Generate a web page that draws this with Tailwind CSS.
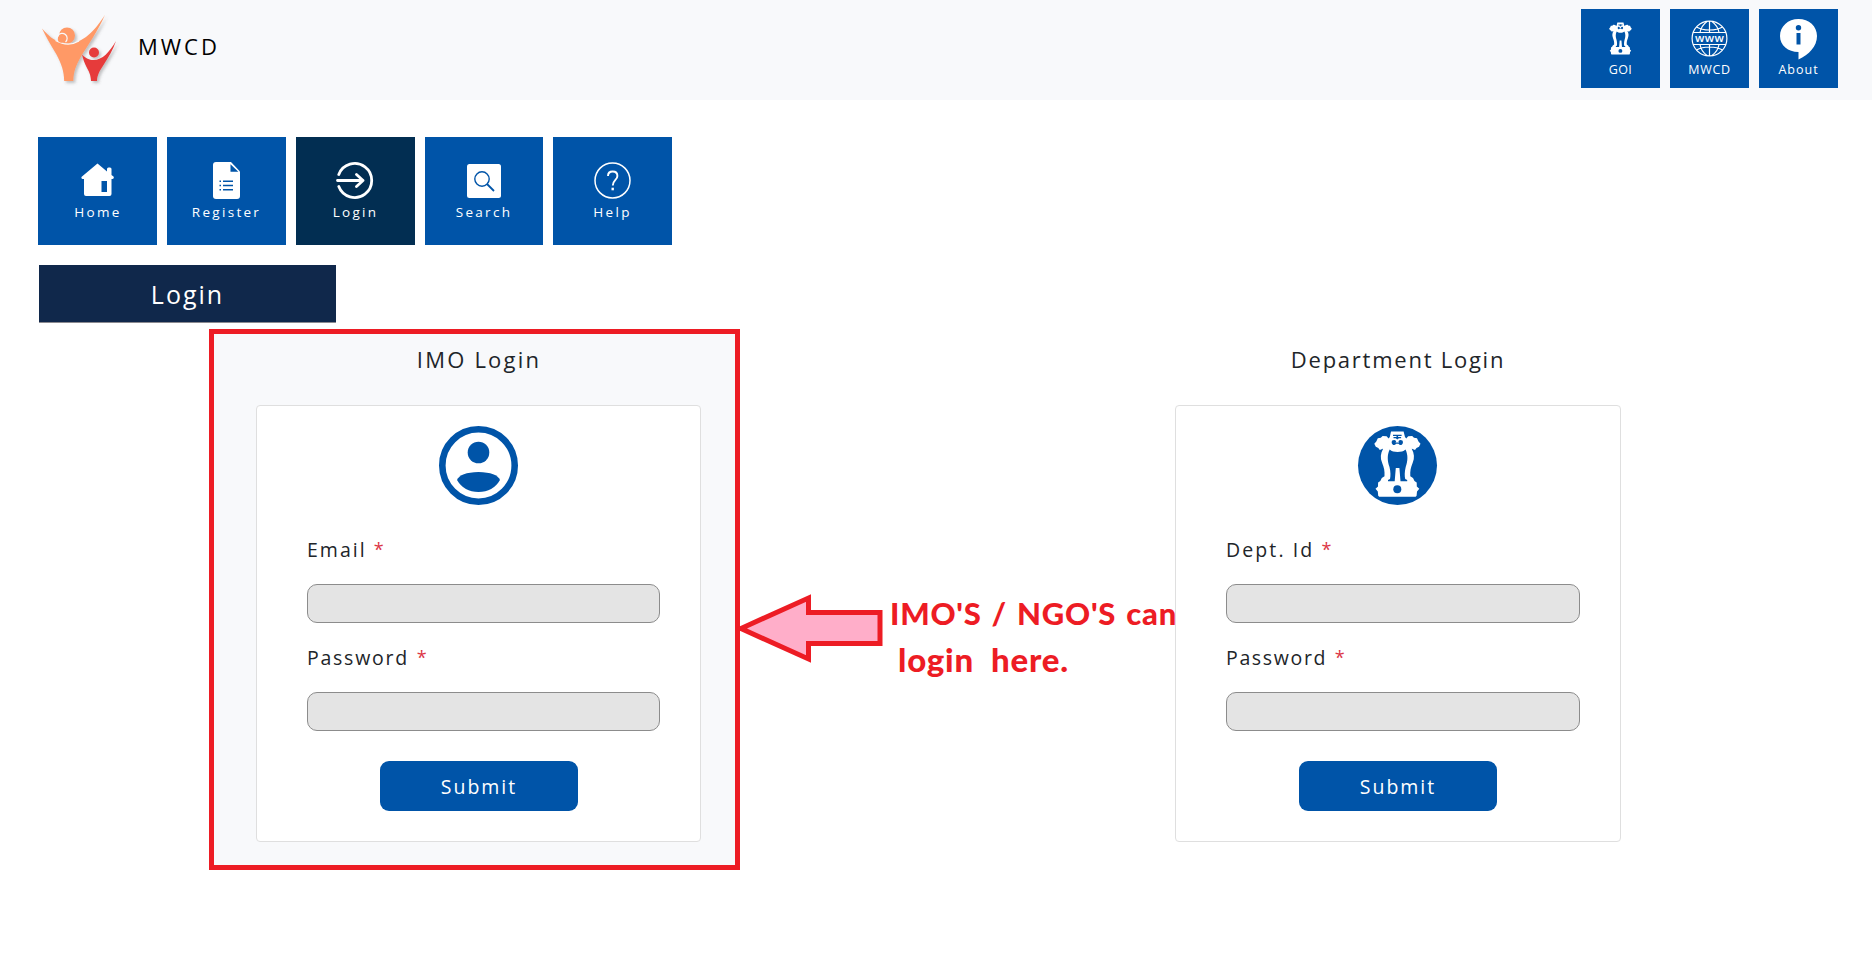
<!DOCTYPE html>
<html lang="en">
<head>
<meta charset="utf-8">
<title>MWCD Login</title>
<script src="https://cdn.jsdelivr.net/npm/@tailwindcss/browser@4"></script>
</head>
<body class="relative h-[966px] overflow-hidden bg-white font-['Open_Sans','Noto_Sans',sans-serif] text-[#212529]">
<svg class="hidden">
  <symbol id="emblem" viewBox="16 5 47 66">
    <path fill="#fff" d="M33 5.500h12.600l1.400 5.500 1.200 1.500 2-2.200 4-.3 1.800 1.800 3 .4 1.500 3.400 2 2.200-1.500 3-2.500 1.200-1.500 2-3-1.200-.3 0c2.600 5 3 9 1 14-2 5-2.700 8-2.400 13.500l2.700 1.800 1.500 2.800 2.200 1.600.1 4 2.500 2.300-2.300 2.700-.4 4.200-1 1h-36.400l-1-1-.4-4.200-2.300-2.700 2.500-2.300.1-4 2.200-1.600 1.500-2.800 2.700-1.800c.3-5.500-.4-8.500-2.400-13.500-2-5-1.600-9 1-14l-.3 0-3 1.200-1.500-2-2.500-1.200-1.500-3 2-2.200 1.500-3.400 3-.4 1.800-1.800 4 .3 2 2.200 1.200-1.500z"/>
    <g fill="#0054a8">
      <path d="M31.700 23.500C29 29 29.300 35 31.500 41c1.200 5 1.200 9 .5 12l-2 1v1.300h6.700l1.100-13.200h3.600l1.100 13.200h6.700V54l-2-1c-.7-3-.7-7 .5-12 2.200-6 2.500-12-.2-17.500-2 1.800-4.600 2.500-7.900 2.500s-6-.7-7.900-2.500z"/>
      <path d="M35 8.800h8.600v1.300h-3.500v.9h3v1.200h-2.200l-1.600 1.300-1.600-1.300h-2.200V11h3v-.9H35z"/>
      <path d="M34.200 14.500q2.500-1.500 4 .8l-.7 1.300h3.600l-.7-1.300q1.500-2.300 4-.8 1.500 2.500-1 4.500-2 .5-2.800-1.200h-2.600q-.8 1.700-2.800 1.200-2.500-2-1-4.500z"/>
      <circle cx="39.300" cy="63.300" r="4"/>
    </g>
  </symbol>
</svg>

<header class="flex h-[100px] items-start bg-[#f8f9fb] pl-[40px] pr-[34px]">
  <svg class="mt-[13px] h-[74px] w-[80px] shrink-0" viewBox="40 13 80 74">
    <defs><filter id="sh" x="-20%" y="-20%" width="150%" height="150%"><feDropShadow dx="2" dy="2" stdDeviation="1.600" flood-color="#555" flood-opacity=".35"/></filter></defs>
    <g filter="url(#sh)">
      <path fill="#ff9966" d="M42 28.500C50 38 58 43.500 68 43.500c15 0 27-13 37-28.800C98 31 88 45 81 56.500c-5 9-7.500 15-7.700 24.500h-9.100c-.2-10-2.700-17-7.700-26.500C51 45 46 37 42 28.500z"/>
      <circle cx="67" cy="35.500" r="8" fill="#ff9966"/>
      <path fill="#e63b3b" d="M82 54.500c4 4 7 5.500 11.500 5.500 9 0 16-8 22.500-19-3 9-8 17-12.500 24-4 6-6.300 10-6.500 16h-6c-.2-6-2-9.500-4.500-14-2-4-3.500-8-4.500-12.500z"/>
      <circle cx="94" cy="52.500" r="5" fill="#e63b3b"/>
    </g>
    <path d="M55.500 40.500Q68 47.500 79 41" fill="none" stroke="#f8f9fb" stroke-width="1.200"/>
    <path d="M58 35.500a5 5 0 1 1 7.500 6.500" fill="none" stroke="#f8f9fb" stroke-width="1.200"/>
    <circle cx="61.500" cy="39" r="3.700" fill="#ff9966"/>
  </svg>
  <div class="ml-[18px] mt-[30px] text-[22px] leading-8 tracking-[3px] text-black">MWCD</div>
  <div class="ml-auto mt-[9px] flex gap-[10px] text-[12.500px] leading-4 tracking-[1px] text-white">
    <a class="flex h-[79px] w-[79px] flex-col items-center bg-[#0054a8] pt-[13px]">
      <svg class="h-[33px] w-[23px]"><use href="#emblem"/></svg>
      <span class="mt-[7px] tracking-[.4px]">GOI</span>
    </a>
    <a class="flex h-[79px] w-[79px] flex-col items-center bg-[#0054a8] pt-[11px]">
      <svg class="h-[37px] w-[37px]" viewBox="0 0 37 37" fill="none" stroke="#fff" stroke-width="1.200">
        <circle cx="18.500" cy="18.500" r="17.400"/>
        <path d="M18.500 1v11M18.500 25v11M5.500 7q5 3 13 3t13-3M5.500 30q5-3 13-3t13 3M2 12.500h33M2 24.500h33M16 1.500Q10 6 9 12.500M21 1.500Q27 6 28 12.500M16 35.500Q10 31 9 24.500M21 35.500Q27 31 28 24.500"/>
        <path d="M3.500 13.100h30v10.800h-30z" fill="#0054a8" stroke="none"/>
        <text x="18.500" y="22" text-anchor="middle" textLength="29" letter-spacing="0" font-size="11.500" font-weight="600" fill="#fff" stroke="none">www</text>
      </svg>
      <span class="mt-[5px] tracking-[.7px]">MWCD</span>
    </a>
    <a class="flex h-[79px] w-[79px] flex-col items-center bg-[#0054a8] pt-[10px]">
      <svg class="h-[41px] w-[37px]" viewBox="0 0 37 41"><path fill="#fff" d="M18.500 0C29 0 37 7 37 17c0 10.500-8 18.500-18.500 23.500V33C8 33 0 26.500 0 17S8 0 18.500 0z"/><circle cx="18.500" cy="8.700" r="2.700" fill="#0054a8"/><path fill="#0054a8" d="M16.500 14h4v11.500h-4z"/></svg>
      <span class="mt-[2px]">About</span>
    </a>
  </div>
</header>

<nav class="ml-[38px] mt-[37px] flex gap-[10px] text-[13.500px] leading-5 tracking-[2.300px] text-white">
  <a class="flex h-[108px] w-[119px] flex-col items-center bg-[#0054a8] pt-[25px]">
    <svg class="h-[37px] w-[33px]" viewBox="0 0 33 37"><path fill="#fff" fill-rule="evenodd" d="M16.500 1.500 26 9.500V7q0-1.500 1.500-1.500h1.500q1.500 0 1.500 1.500v6l2 1.500q1 2-1 2.500h-1V32q0 2-2 2H5q-2 0-2-2V17H1.500q-2-1-.5-2.500zM20.500 19v11h5.500V19z"/></svg>
    <span class="mt-[3px] pl-px">Home</span>
  </a>
  <a class="flex h-[108px] w-[119px] flex-col items-center bg-[#0054a8] pt-[25px]">
    <svg class="h-[37px] w-[27px]" viewBox="0 0 27 37"><path fill="#fff" d="M3 0h15l9 9.500V34q0 3-3 3H3q-3 0-3-3V3q0-3 3-3z"/><path fill="#0054a8" d="M17.500 2.200v7.600h7.800zM6.500 18.500H8v1.500H6.500zM10 18.500h10v1.500H10zM6.500 22.800H8v1.500H6.500zM10 22.800h10v1.500H10zM6.500 27H8v1.500H6.500zM10 27h10v1.500H10z"/></svg>
    <span class="mt-[3px]">Register</span>
  </a>
  <a class="flex h-[108px] w-[119px] flex-col items-center bg-[#022e52] pt-[25px]">
    <svg class="mr-px h-[37px] w-[38px]" viewBox="0 0 38 37" fill="none" stroke="#fff" stroke-width="2.800" stroke-linecap="round" stroke-linejoin="round"><path d="M2.800 12.500a17 17 0 1 1 0 12M1.500 18.500H27M20.500 12.500l6.500 6-6.500 6"/></svg>
    <span class="mt-[3px]">Login</span>
  </a>
  <a class="flex h-[108px] w-[118px] flex-col items-center bg-[#0054a8] pt-[25px]">
    <svg class="h-[37px] w-[34px]" viewBox="0 0 34 37"><rect y="2" width="34" height="34" rx="2.500" fill="#fff"/><circle cx="15" cy="17" r="7.200" fill="none" stroke="#0054a8" stroke-width="1.400"/><path d="m20 22 7 7" stroke="#0054a8" stroke-width="1.800"/></svg>
    <span class="mt-[3px]">Search</span>
  </a>
  <a class="flex h-[108px] w-[119px] flex-col items-center bg-[#0054a8] pt-[25px]">
    <svg class="h-[37px] w-[37px]" viewBox="0 0 37 37" fill="none" stroke="#fff"><circle cx="18.500" cy="18.500" r="17.500" stroke-width="1.500"/><path d="M14 14q0-4.500 4.700-4.500t4.700 4.500q0 2-2.200 4.200t-2.400 5.300" stroke-width="1.900"/><path d="M17.500 25.700h2.400v2.600h-2.400z" fill="#fff" stroke="none"/></svg>
    <span class="mt-[3px]">Help</span>
  </a>
</nav>

<h1 class="ml-[39px] mt-5 h-[58px] w-[297px] border-b border-[#8b8a90] bg-[#10284b] pt-[11px] text-center text-[25px] leading-9 tracking-[2px] text-white">Login</h1>

<main class="ml-[209px] mt-[6px] flex gap-[388px]">
  <section class="flex h-[541px] w-[531px] flex-col items-center border-5 border-[#ed1c24] bg-[#f8f9fb] pl-[8px]">
    <h2 class="mt-[9px] pl-px text-[22px] leading-8 tracking-[2.200px]">IMO Login</h2>
    <form class="mt-[30px] flex h-[437px] w-[445px] flex-col rounded-[4px] border border-[#dfdfdf] bg-white pl-[50px]">
      <svg class="ml-[132px] mt-[20px] h-[79px] w-[79px] shrink-0" viewBox="0 0 79 79"><circle cx="39.500" cy="39.500" r="36.200" fill="none" stroke="#0054a8" stroke-width="6.600"/><circle cx="39.500" cy="26.500" r="10.800" fill="#0054a8"/><path fill="#0054a8" d="M18 54q3-7.500 21.500-8Q58 46.500 61 54 54 66 39.500 66T18 54z"/></svg>
      <label class="mt-[29px] h-8 text-[19.500px] leading-8 tracking-[2px]">Email <span class="align-[1px] text-[18px] leading-none text-[#dc3545]">*</span></label>
      <input class="mt-[18px] h-[39px] w-[353px] shrink-0 rounded-[10px] border border-[#8c8c8c] bg-[#e4e4e4]">
      <label class="mt-[19px] h-8 text-[19.500px] leading-8 tracking-[1.750px]">Password <span class="ml-px align-[1px] text-[18px] leading-none text-[#dc3545]">*</span></label>
      <input type="password" class="mt-[18px] h-[39px] w-[353px] shrink-0 rounded-[10px] border border-[#8c8c8c] bg-[#e4e4e4]">
      <button type="button" class="ml-[73px] mt-[30px] h-[50px] w-[198px] rounded-[9px] bg-[#0054a8] pt-[2px] text-[19.500px] tracking-[2px] text-white">Submit</button>
    </form>
  </section>
  <section class="flex h-[541px] w-[540px] flex-col items-center pt-[5px]">
    <h2 class="mt-[9px] text-[22px] leading-8 tracking-[1.750px]">Department Login</h2>
    <form class="mt-[30px] flex h-[437px] w-[446px] flex-col rounded-[4px] border border-[#dfdfdf] bg-white pl-[50px]">
      <div class="ml-[132px] mt-[20px] h-[79px] w-[79px] shrink-0 rounded-full bg-[#0054a8] pl-[16px] pt-[5px]"><svg class="h-[66px] w-[47px]"><use href="#emblem"/></svg></div>
      <label class="mt-[29px] h-8 text-[19.500px] leading-8 tracking-[2.100px]">Dept. Id <span class="align-[1px] text-[18px] leading-none text-[#dc3545]">*</span></label>
      <input class="mt-[18px] h-[39px] w-[354px] shrink-0 rounded-[10px] border border-[#8c8c8c] bg-[#e4e4e4]">
      <label class="mt-[19px] h-8 text-[19.500px] leading-8 tracking-[1.650px]">Password <span class="ml-px align-[1px] text-[18px] leading-none text-[#dc3545]">*</span></label>
      <input type="password" class="mt-[18px] h-[39px] w-[354px] shrink-0 rounded-[10px] border border-[#8c8c8c] bg-[#e4e4e4]">
      <button type="button" class="ml-[73px] mt-[30px] h-[50px] w-[198px] rounded-[9px] bg-[#0054a8] pt-[2px] text-[19.500px] tracking-[2px] text-white">Submit</button>
    </form>
  </section>
</main>

<div class="absolute left-[736px] top-[592px] flex">
  <svg class="h-[72px] w-[148px] shrink-0" viewBox="736 592 148 72"><path d="M741 628.500 808.500 598V612.500H880V643.500H808.500V659z" fill="#ffaec9" stroke="#ed1c24" stroke-width="5"/></svg>
  <p class="-mt-[2px] whitespace-pre pl-[6px] font-['Lato',sans-serif] text-[31px] font-black leading-[46px] text-[#ed1c24]"><span class="tracking-[.750px] [word-spacing:2px]">IMO'S / NGO'S can</span>
<span class="ml-[8px] text-[33px] tracking-[.750px]">login  here.</span></p>
</div>
</body>
</html>
